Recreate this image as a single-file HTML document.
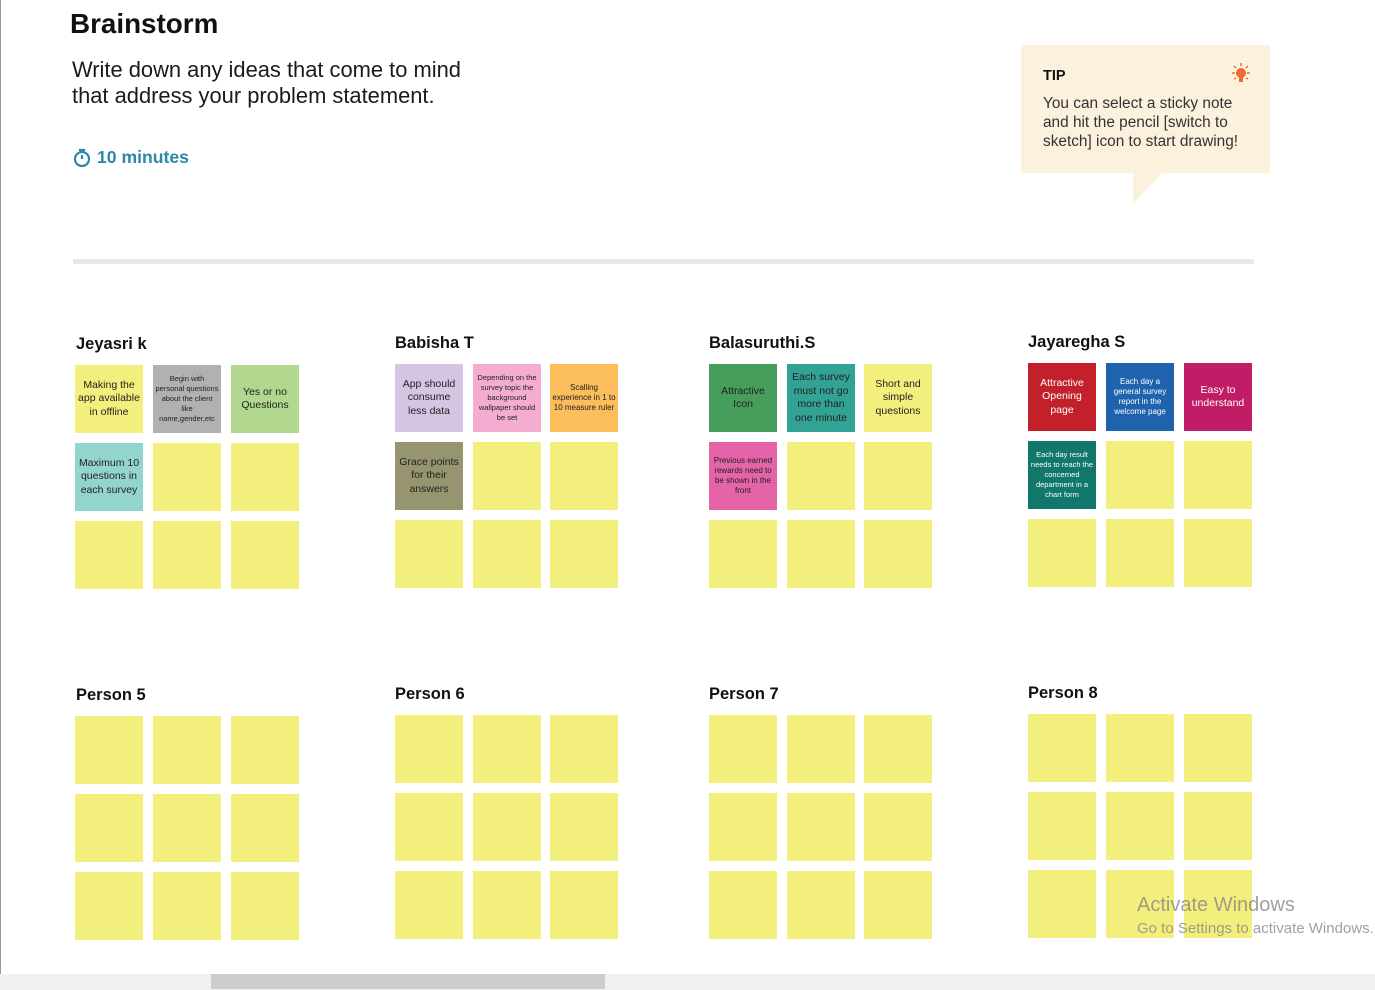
<!DOCTYPE html>
<html><head><meta charset="utf-8"><style>
*{margin:0;padding:0;box-sizing:border-box}
body{width:1375px;height:990px;position:relative;background:#fff;font-family:"Liberation Sans",sans-serif;overflow:hidden;color:#111}
.a{position:absolute}
.n{position:absolute;width:68px;height:68px;background:#f3ef7d;display:flex;align-items:center;justify-content:center;text-align:center;font-size:10.5px;line-height:13.5px;color:#222;padding:2px}
.s{font-size:7.5px;line-height:10px}
.h{position:absolute;font-weight:bold;font-size:16.5px;color:#111}
</style></head><body>
<div class="a" style="left:0;top:0;width:1px;height:974px;background:#999"></div>
<div class="a" style="left:70px;top:8px;font-weight:bold;font-size:27.8px">Brainstorm</div>
<div class="a" style="left:72px;top:57px;font-size:21.9px;line-height:26px;color:#1a1a1a">Write down any ideas that come to mind<br>that address your problem statement.</div>
<svg class="a" style="left:72px;top:148px" width="20" height="20" viewBox="0 0 20 20"><circle cx="10" cy="11" r="7" fill="none" stroke="#2a89a6" stroke-width="2.2"/><path d="M7 2h6M10 11V7" stroke="#2a89a6" stroke-width="2.2"/></svg>
<div class="a" style="left:97px;top:147px;font-weight:bold;font-size:17.6px;color:#2a89a6">10 minutes</div>
<div class="a" style="left:1021px;top:45px;width:249px;height:128px;background:#fbf1dd"></div>
<div class="a" style="left:1133px;top:172px;width:0;height:0;border-left:0 solid transparent;border-right:30px solid transparent;border-top:32px solid #fbf1dd"></div>
<div class="a" style="left:1043px;top:68px;font-weight:bold;font-size:14.5px">TIP</div>
<svg class="a" style="left:1229px;top:62px" width="24" height="24" viewBox="0 0 24 24"><circle cx="12" cy="11" r="5" fill="#f06a35"/><rect x="10" y="15" width="4" height="5" fill="#f06a35"/><g stroke="#f06a35" stroke-width="1.5"><path d="M12 1v3M3 11h3M18 11h3M5 4l2 2M19 4l-2 2M5 17l2-1M19 17l-2-1"/></g></svg>
<div class="a" style="left:1043px;top:94px;font-size:15.4px;line-height:19px;color:#333">You can select a sticky note<br>and hit the pencil [switch to<br>sketch] icon to start drawing!</div>
<div class="a" style="left:73px;top:259px;width:1181px;height:5px;background:#e9e9e9"></div>

<div class="h" style="left:76px;top:335px">Jeyasri k</div>
<div class="h" style="left:395px;top:334px">Babisha T</div>
<div class="h" style="left:709px;top:334px">Balasuruthi.S</div>
<div class="h" style="left:1028px;top:333px">Jayaregha S</div>
<div class="h" style="left:76px;top:686px">Person 5</div>
<div class="h" style="left:395px;top:685px">Person 6</div>
<div class="h" style="left:709px;top:685px">Person 7</div>
<div class="h" style="left:1028px;top:684px">Person 8</div>

<div class="n" style="left:75px;top:365px">Making the app available in offline</div>
<div class="n s" style="left:153px;top:365px;background:#b1b1b1">Begin with personal questions about the client like name,gender,etc</div>
<div class="n" style="left:231px;top:365px;background:#b2d88f">Yes or no Questions</div>
<div class="n" style="left:75px;top:443px;background:#94d4ce">Maximum 10 questions in each survey</div>
<div class="n" style="left:153px;top:443px"></div><div class="n" style="left:231px;top:443px"></div>
<div class="n" style="left:75px;top:521px"></div><div class="n" style="left:153px;top:521px"></div><div class="n" style="left:231px;top:521px"></div>
<div class="n" style="left:395px;top:364px;background:#d4c5e3">App should consume less data</div>
<div class="n s" style="left:473px;top:364px;background:#f4acd0">Depending on the survey topic the background wallpaper should be set</div>
<div class="n s" style="left:550px;top:364px;background:#fcbd5c;font-size:8px">Scalling experience in 1 to 10 measure ruler</div>
<div class="n" style="left:395px;top:442px;background:#96956f">Grace points for their answers</div>
<div class="n" style="left:473px;top:442px"></div><div class="n" style="left:550px;top:442px"></div>
<div class="n" style="left:395px;top:520px"></div><div class="n" style="left:473px;top:520px"></div><div class="n" style="left:550px;top:520px"></div>
<div class="n" style="left:709px;top:364px;background:#479e5c">Attractive Icon</div>
<div class="n" style="left:787px;top:364px;background:#31a294">Each survey must not go more than one minute</div>
<div class="n" style="left:864px;top:364px">Short and simple questions</div>
<div class="n s" style="left:709px;top:442px;background:#e563a7;font-size:8px">Previous earned rewards need to be shown in the front</div>
<div class="n" style="left:787px;top:442px"></div><div class="n" style="left:864px;top:442px"></div>
<div class="n" style="left:709px;top:520px"></div><div class="n" style="left:787px;top:520px"></div><div class="n" style="left:864px;top:520px"></div>
<div class="n" style="left:1028px;top:363px;background:#c2202a;color:#fff">Attractive Opening page</div>
<div class="n s" style="left:1106px;top:363px;background:#1f62ad;color:#fff;font-size:8px">Each day a general survey report in the welcome page</div>
<div class="n" style="left:1184px;top:363px;background:#c11d66;color:#fff">Easy to understand</div>
<div class="n s" style="left:1028px;top:441px;background:#10776a;color:#fff">Each day result needs to reach the concerned department in a chart form</div>
<div class="n" style="left:1106px;top:441px"></div><div class="n" style="left:1184px;top:441px"></div>
<div class="n" style="left:1028px;top:519px"></div><div class="n" style="left:1106px;top:519px"></div><div class="n" style="left:1184px;top:519px"></div>

<div class="n" style="left:75px;top:716px"></div><div class="n" style="left:153px;top:716px"></div><div class="n" style="left:231px;top:716px"></div>
<div class="n" style="left:75px;top:794px"></div><div class="n" style="left:153px;top:794px"></div><div class="n" style="left:231px;top:794px"></div>
<div class="n" style="left:75px;top:872px"></div><div class="n" style="left:153px;top:872px"></div><div class="n" style="left:231px;top:872px"></div>
<div class="n" style="left:395px;top:715px"></div><div class="n" style="left:473px;top:715px"></div><div class="n" style="left:550px;top:715px"></div>
<div class="n" style="left:395px;top:793px"></div><div class="n" style="left:473px;top:793px"></div><div class="n" style="left:550px;top:793px"></div>
<div class="n" style="left:395px;top:871px"></div><div class="n" style="left:473px;top:871px"></div><div class="n" style="left:550px;top:871px"></div>
<div class="n" style="left:709px;top:715px"></div><div class="n" style="left:787px;top:715px"></div><div class="n" style="left:864px;top:715px"></div>
<div class="n" style="left:709px;top:793px"></div><div class="n" style="left:787px;top:793px"></div><div class="n" style="left:864px;top:793px"></div>
<div class="n" style="left:709px;top:871px"></div><div class="n" style="left:787px;top:871px"></div><div class="n" style="left:864px;top:871px"></div>
<div class="n" style="left:1028px;top:714px"></div><div class="n" style="left:1106px;top:714px"></div><div class="n" style="left:1184px;top:714px"></div>
<div class="n" style="left:1028px;top:792px"></div><div class="n" style="left:1106px;top:792px"></div><div class="n" style="left:1184px;top:792px"></div>
<div class="n" style="left:1028px;top:870px"></div><div class="n" style="left:1106px;top:870px"></div><div class="n" style="left:1184px;top:870px"></div>

<div class="a" style="left:1137px;top:894px;font-size:20px;color:rgba(130,130,130,.75)">Activate Windows</div>
<div class="a" style="left:1137px;top:920px;font-size:15px;color:rgba(130,130,130,.75)">Go to Settings to activate Windows.</div>
<div class="a" style="left:0;top:974px;width:1375px;height:16px;background:#f0f0f0"></div>
<div class="a" style="left:211px;top:974px;width:394px;height:15px;background:#cdcdcd"></div>
</body></html>
